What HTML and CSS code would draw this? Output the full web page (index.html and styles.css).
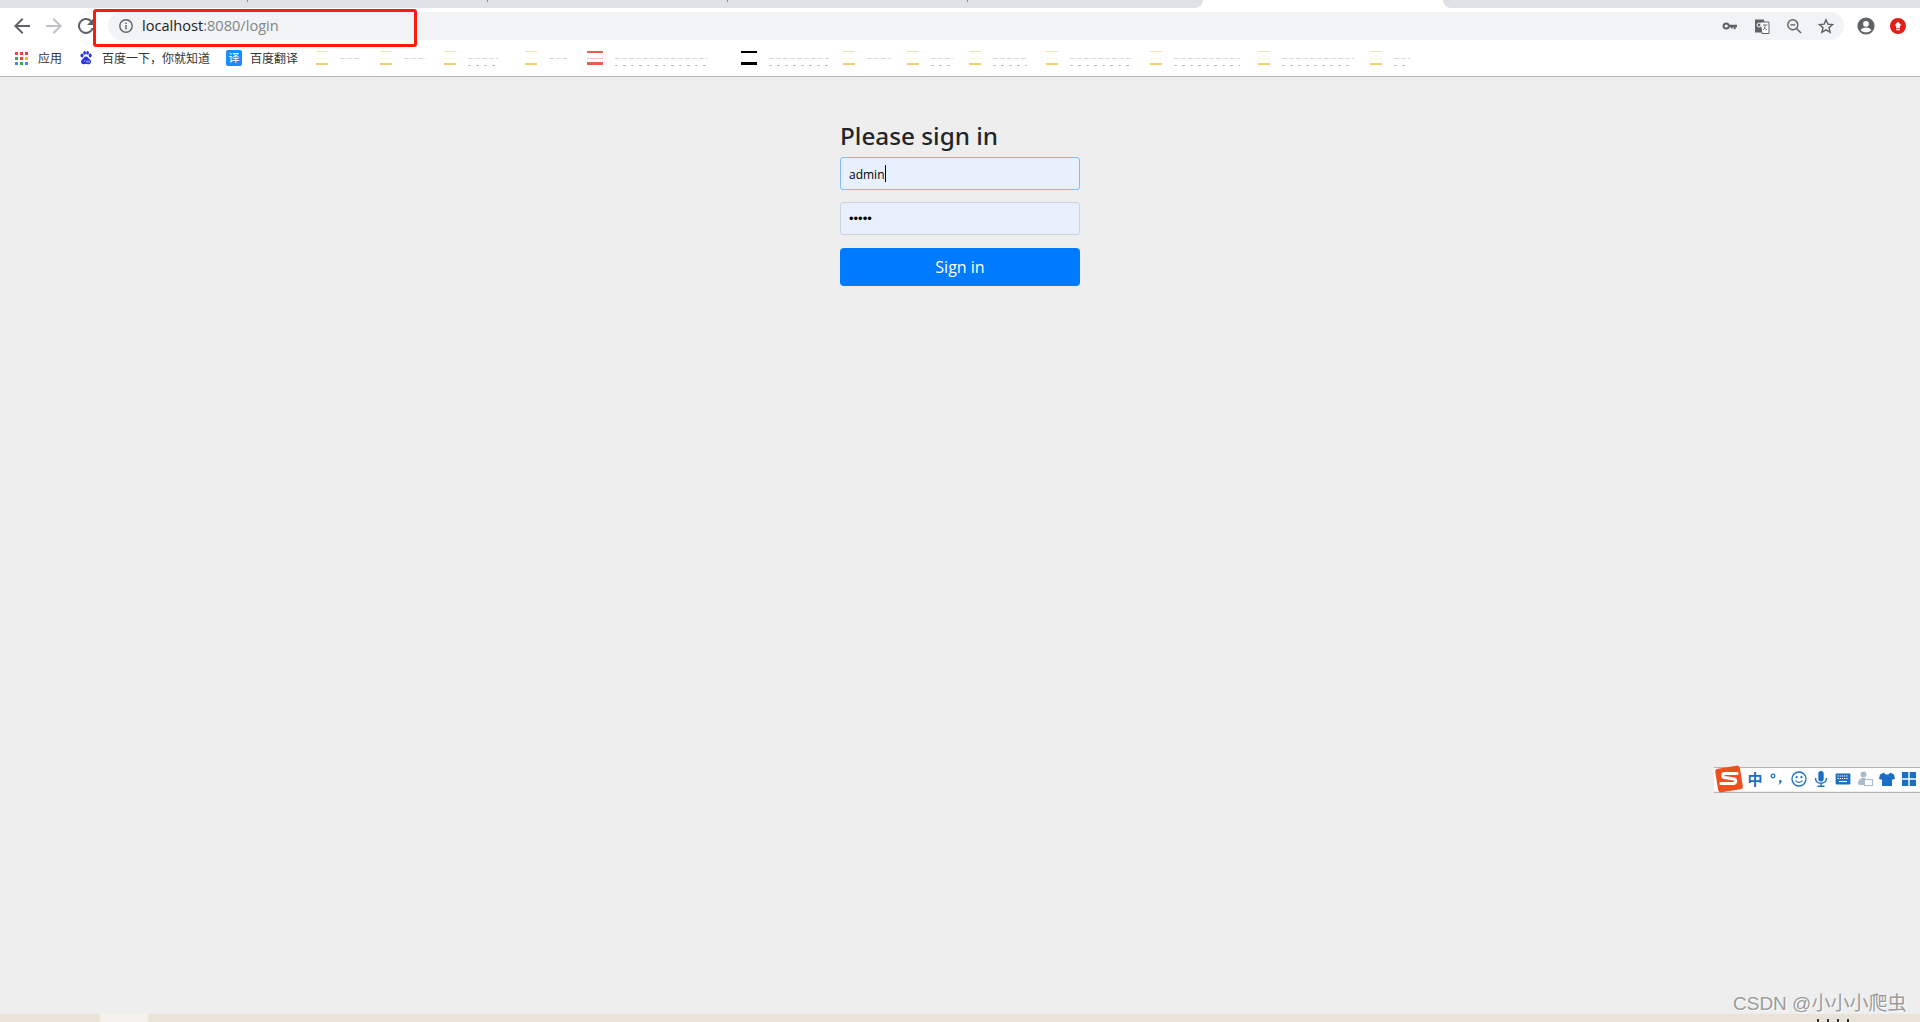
FILE: index.html
```html
<!DOCTYPE html>
<html lang="en">
<head>
<meta charset="utf-8">
<title>Please sign in</title>
<link rel="stylesheet" href="styles.css">
</head>
<body>
<div class="browser">
  <div class="tabstrip">
    <div class="tabs-left"><i class="tick"></i><i class="tick"></i><i class="tick"></i><i class="tick"></i></div>
    <div class="tab-active"></div>
    <div class="tabs-right"></div>
  </div>
  <div class="toolbar">
    <div class="nav">
      <svg class="ico" viewBox="0 0 24 24" width="24" height="24"><path d="M20 11H7.800l5.600-5.600L12 4l-8 8 8 8 1.400-1.400L7.800 13H20z" fill="#5f6368"/></svg>
      <svg class="ico" viewBox="0 0 24 24" width="24" height="24"><path d="M4 11h12.200l-5.600-5.600L12 4l8 8-8 8-1.400-1.400 5.600-5.600H4z" fill="#bdc1c6"/></svg>
      <svg class="ico" viewBox="0 0 24 24" width="24" height="24"><path d="M17.650 6.350A8 8 0 1 0 19.730 14h-2.080a6 6 0 1 1-1.410-6.240L13 11h7V4z" fill="#5f6368"/></svg>
    </div>
    <div class="omnibox">
      <svg class="info" viewBox="0 0 16 16" width="16" height="16"><circle cx="8" cy="8" r="6.200" fill="none" stroke="#5f6368" stroke-width="1.400"/><path d="M7.300 7h1.400v4.400H7.300zM7.300 4.500h1.400v1.400H7.300z" fill="#5f6368"/></svg>
      <span class="url">localhost<span class="url-rest">:8080/login</span></span>
      <div class="omni-actions">
        <svg viewBox="0 0 16 16" width="16" height="16"><circle cx="4.200" cy="8" r="2.600" fill="none" stroke="#5f6368" stroke-width="2"/><path d="M6.500 6.700h8.500v2.600h-1.400v1.900h-1.800V9.300h-1v1.200H8.900V9.300H6.500z" fill="#5f6368"/></svg>
        <svg viewBox="0 0 16 16" width="16" height="16"><path d="M1 1.500h9l1 13H1z" fill="#5f6368"/><path d="M6 4h9v11.500H8z" fill="#fff" stroke="#5f6368" stroke-width="1"/><circle cx="5" cy="7" r="2" fill="none" stroke="#fff" stroke-width="1"/><path d="M9 7h4.500M11 7c0 3-1 4-2 5M10 9.500l3 2.500" fill="none" stroke="#5f6368" stroke-width=".9"/></svg>
        <svg viewBox="0 0 16 16" width="16" height="16"><circle cx="6.800" cy="6.800" r="5" fill="none" stroke="#5f6368" stroke-width="1.400"/><path d="M10.500 10.500l4.500 4.500" stroke="#5f6368" stroke-width="1.600"/><path d="M4.400 6.200h4.800v1.300H4.400z" fill="#5f6368"/></svg>
        <svg viewBox="0 0 16 16" width="16" height="16"><path d="M8 1.800l1.900 4.300 4.700.4-3.600 3.100 1.100 4.600L8 11.800l-4.100 2.400L5 9.600 1.400 6.500l4.700-.4z" fill="none" stroke="#5f6368" stroke-width="1.400"/></svg>
      </div>
    </div>
    <div class="profile">
      <svg viewBox="0 0 18 18" width="18" height="18"><circle cx="9" cy="9" r="8.600" fill="#5f6368"/><circle cx="9" cy="6.800" r="2.900" fill="#fff"/><path d="M3.600 13c1.400-1.900 3.400-2.600 5.400-2.600s4 .7 5.400 2.600C13.200 14.500 11.200 15.300 9 15.300S4.800 14.500 3.600 13z" fill="#fff"/></svg>
      <svg viewBox="0 0 16 16" width="16" height="16"><circle cx="8" cy="8" r="8" fill="#dd2118"/><path d="M8 3.800l3.600 3.600H9.900v2.800H6.100V7.400H4.400zM6.100 11h3.800v1.200H6.100z" fill="#fff"/></svg>
    </div>
  </div>
  <div class="bookmarks">
    <div class="bm bm-apps">
      <span class="apps"><i class="r"></i><i class="r"></i><i class="r"></i><i class="g"></i><i class="r"></i><i class="y"></i><i class="b"></i><i class="g"></i><i class="b"></i></span>
      <span>应用</span>
    </div>
    <div class="bm bm-baidu">
      <svg viewBox="0 0 14 14" width="14" height="14"><g fill="#2932e1"><ellipse cx="3" cy="4.600" rx="1.500" ry="2"/><ellipse cx="5.600" cy="1.900" rx="1.400" ry="1.800"/><ellipse cx="8.600" cy="1.900" rx="1.400" ry="1.800"/><ellipse cx="11.200" cy="4.600" rx="1.500" ry="2"/><path d="M7 5.500c2 0 2.600 2 4.200 3.200 1.600 1.500.8 4.800-2.200 4.500-.9-.1-1.400-.4-2-.4s-1.200.4-2.200.4C2 13.400 1.400 10 3 8.700 4.400 7.500 5 5.500 7 5.500z"/></g><path d="M4.800 10h1.300M8 9.500v2.200M10 9.500v2.200" stroke="#fff" stroke-width=".8" fill="none"/></svg>
      <span>百度一下，你就知道</span>
    </div>
    <div class="bm bm-fanyi">
      <span class="fanyi">译</span>
      <span>百度翻译</span>
    </div>
    <div class="bm folder w64"><i class="fold"></i><i class="smear s20"></i></div>
    <div class="bm folder w64"><i class="fold"></i><i class="smear s22"></i></div>
    <div class="bm folder w81"><i class="fold"></i><i class="smear s30 two"></i></div>
    <div class="bm folder w62"><i class="fold"></i><i class="smear s18"></i></div>
    <div class="bm folder w154"><i class="fold red"></i><i class="smear s100 two"></i></div>
    <div class="bm folder w102"><i class="fold black"></i><i class="smear s60 two"></i></div>
    <div class="bm folder w64"><i class="fold"></i><i class="smear s24"></i></div>
    <div class="bm folder w62"><i class="fold"></i><i class="smear s22 two"></i></div>
    <div class="bm folder w77"><i class="fold"></i><i class="smear s34 two"></i></div>
    <div class="bm folder w104"><i class="fold"></i><i class="smear s62 two"></i></div>
    <div class="bm folder w108"><i class="fold"></i><i class="smear s66 two"></i></div>
    <div class="bm folder w112"><i class="fold"></i><i class="smear s72 two"></i></div>
    <div class="bm folder"><i class="fold"></i><i class="smear s16 two"></i></div>
  </div>
  <main class="page">
    <form class="signin">
      <h2 class="heading">Please sign in</h2>
      <div class="field field-focus"><span class="value">admin</span><i class="caret"></i></div>
      <div class="field"><span class="dots">•••••</span></div>
      <button class="submit" type="button">Sign in</button>
    </form>
  </main>
  <div class="taskstrip"><i class="task-active"></i><div class="task-marks"><i></i><i></i><i></i><i></i></div></div>
</div>

<div class="ime">
  <svg class="ime-logo" viewBox="0 0 30 30" width="30" height="30"><rect x="2.500" y="3" width="25" height="24" rx="3" transform="rotate(-9 15 15)" fill="#f0501e"/><path d="M23 9.500H10.500c-2 0-2.500 3.500 0 4l9.500 1.500c2.500.5 2 4.500-.5 4.500H7" fill="none" stroke="#fff" stroke-width="3.200" stroke-linecap="round"/></svg>
  <span class="ime-slot ime-zh">中</span>
  <span class="ime-slot"><svg viewBox="0 0 14 16" width="14" height="16"><circle cx="3" cy="5" r="1.800" fill="none" stroke="#1a6fc4" stroke-width="1.300"/><path d="M10.500 9c1 0 1.500 1 1 2-.4 1-1.200 2-2.500 2.700l-.4-.5c.8-.6 1.200-1.200 1.300-1.700-1.400-.4-1-2.500.6-2.500z" fill="#1a6fc4"/></svg></span>
  <span class="ime-slot"><svg viewBox="0 0 16 16" width="16" height="16"><circle cx="8" cy="8" r="7" fill="none" stroke="#1a6fc4" stroke-width="1.300"/><circle cx="5.600" cy="6.200" r="1.100" fill="#1a6fc4"/><circle cx="10.400" cy="6.200" r="1.100" fill="#1a6fc4"/><path d="M4.500 9.500c1.500 2.500 5.500 2.500 7 0" fill="none" stroke="#1a6fc4" stroke-width="1.200"/></svg></span>
  <span class="ime-slot"><svg viewBox="0 0 14 16" width="14" height="16"><rect x="4.300" y="0" width="5.400" height="10.500" rx="2.700" fill="#1a6fc4"/><path d="M1.500 7c0 7 11 7 11 0M7 12v3M3.500 15.300h7" fill="none" stroke="#1a6fc4" stroke-width="1.400"/></svg></span>
  <span class="ime-slot"><svg viewBox="0 0 16 12" width="16" height="12"><rect x=".6" y=".6" width="14.800" height="10.800" rx="1" fill="#1a6fc4"/><path d="M2.500 3h11M2.500 5.500h11" stroke="#fff" stroke-width="1.200" stroke-dasharray="1.300 .9"/><path d="M4 8.500h8" stroke="#fff" stroke-width="1.200"/></svg></span>
  <span class="ime-slot"><svg viewBox="0 0 16 16" width="16" height="16"><circle cx="6.500" cy="3.500" r="3" fill="#a9bac9"/><path d="M1 12c0-3 2.500-5 5.500-5 1.500 0 2 .5 2.500 1v6H2z" fill="#a9bac9"/><rect x="7.500" y="8.500" width="8" height="6" fill="#fff" stroke="#a9bac9"/></svg></span>
  <span class="ime-slot"><svg viewBox="0 0 16 16" width="16" height="16"><path d="M5 1.500L1 3.500 0 8l3 .8V15h10V8.800l3-.8-1-4.500-4-2c-.5 1.500-1.500 2-3 2s-2.500-.5-3-2z" fill="#1a6fc4"/></svg></span>
  <span class="ime-slot"><svg viewBox="0 0 14 14" width="14" height="14"><path d="M0 0h6.300v6.300H0zM7.700 0H14v6.300H7.700zM0 7.700h6.300V14H0zM7.700 7.700H14V14H7.700z" fill="#1a6fc4"/></svg></span>
</div>

<div class="annotation"></div>
<div class="watermark">CSDN @小小小爬虫</div>
</body>
</html>
```

FILE: styles.css
```css
* { box-sizing: border-box; }
html, body { margin: 0; height: 100%; overflow: hidden; }
body { font-family: "Open Sans", "Noto Sans CJK SC", sans-serif; background: #eee; }
i { display: block; font-style: normal; }
svg { display: block; flex: none; }

.browser { display: flex; flex-direction: column; height: 1022px; }

.tabstrip { display: flex; height: 8px; background: #fff; flex: none; }
.tabs-left { width: 1203px; background: #dee1e6; border-bottom-right-radius: 8px; display: flex; padding-left: 247px; gap: 239px; }
.tab-active { width: 240px; }
.tabs-right { flex: 1; background: #dee1e6; border-bottom-left-radius: 8px; }
.tick { width: 1px; height: 2px; background: #8a8d91; }

.toolbar { height: 32px; background: #fff; display: flex; align-items: center; padding: 4px 0 0 10px; flex: none; }
.nav { display: flex; gap: 8px; width: 98px; flex: none; }
.ico { width: 24px; height: 24px; }
.omnibox { width: 1736px; height: 28px; background: #f1f3f4; border-radius: 14px; display: flex; align-items: center; padding: 0 10px; flex: none; }
.info { flex: none; }
.url { font-size: 14.6px; line-height: 26px; padding-bottom: 2px; color: #202124; margin-left: 8px; white-space: nowrap; }
.url-rest { color: #80868b; }
.omni-actions { margin-left: auto; display: flex; gap: 10px; }
.omni-actions svg { width: 16px; height: 16px; margin-left: 6px; }
.profile { display: flex; align-items: center; gap: 15px; margin-left: 13px; }

.bookmarks { height: 37px; background: #fff; border-bottom: 1px solid #b8b8b8; flex: none; display: flex; align-items: center; padding-left: 15px; font-size: 12px; color: #333; white-space: nowrap; }
.bm { display: flex; align-items: center; flex: none; }
.bm-apps { width: 64px; gap: 10px; }
.bm-baidu { width: 147px; gap: 9px; }
.bm-fanyi { width: 90px; gap: 8px; }
.apps { display: grid; grid-template-columns: repeat(3, 3px); gap: 2px; width: 13px; }
.apps i { width: 3px; height: 3px; }
.r { background: #ea4335; } .g { background: #34a853; } .b { background: #4285f4; } .y { background: #fbbc05; }
.fanyi { width: 16px; height: 16px; border-radius: 2px; background: #1a8cff; color: #fff; font-size: 11px; line-height: 16px; text-align: center; }

.folder { gap: 12px; height: 16px; }
.fold { width: 12px; height: 14px; border-top: 1px solid #f3e2a3; border-bottom: 2px solid #f2cf6a; background: linear-gradient(#fcf6e2, #fcf6e2) 0 6px / 100% 1px no-repeat; }
.fold.red { width: 16px; border-top: 2px solid #e8604c; border-bottom: 3px solid #e8604c; background: linear-gradient(#f5c6bd, #f5c6bd) 0 5px / 100% 1px no-repeat; }
.fold.black { width: 16px; border-top: 2px solid #000; border-bottom: 3px solid #000; background: none; }
.smear { height: 8px; margin-top: 7px; background: repeating-linear-gradient(90deg, #d4d4d4 0 4px, #ececec 4px 6px, transparent 6px 7px, #dedede 7px 12px, transparent 12px 14px) 0 0 / 100% 1px no-repeat; }
.smear.two { background: repeating-linear-gradient(90deg, #d4d4d4 0 4px, #ececec 4px 6px, transparent 6px 7px, #dedede 7px 12px, transparent 12px 14px) 0 0 / 100% 1px no-repeat, repeating-linear-gradient(90deg, #c4c4c4 0 3px, transparent 3px 8px, #b8b8c4 8px 11px, transparent 11px 16px) 0 100% / 100% 1px no-repeat; }
.s16 { width: 16px; } .s18 { width: 18px; } .s20 { width: 20px; } .s22 { width: 22px; } .s24 { width: 24px; } .s30 { width: 30px; } .s34 { width: 34px; } .s60 { width: 60px; } .s62 { width: 62px; } .s66 { width: 66px; } .s72 { width: 72px; } .s100 { width: 93px; }
.w62 { width: 62px; } .w64 { width: 64px; } .w77 { width: 77px; } .w81 { width: 81px; } .w102 { width: 102px; } .w104 { width: 104px; } .w108 { width: 108px; } .w112 { width: 112px; } .w154 { width: 154px; }

.page { flex: 1; background: #eee; display: flex; justify-content: center; padding-top: 43px; }
.signin { width: 240px; display: flex; flex-direction: column; }
.heading { margin: 0 0 5px; font-family: "Noto Sans", sans-serif; font-size: 24.3px; line-height: 32px; font-weight: 500; color: #212529; }
.field { height: 33px; margin-bottom: 12px; background: #e8f0fe; border: 1px solid #ced4da; border-radius: 3px; padding: 0 8px; display: flex; align-items: center; font-size: 12px; color: #000; }
.field-focus { border-color: #80bdff; }
.value { margin-top: 2px; }
.caret { width: 1px; height: 17px; background: #000; }
.dots { font-family: "Liberation Sans", sans-serif; font-size: 13px; }
.submit { height: 38px; margin-top: 1px; background: #007bff; border: 0; border-radius: 4px; color: #fff; font: 400 16px "Open Sans", sans-serif; }

.taskstrip { height: 8px; background: #e9e3da; flex: none; padding-left: 100px; position: relative; overflow: hidden; }
.task-active { width: 48px; height: 8px; background: #f5f2ed; }
.task-marks { position: absolute; left: 1817px; top: 5px; display: flex; gap: 8px; }
.task-marks i { width: 2px; height: 3px; background: #333; }

.ime { position: absolute; left: 1714px; top: 764px; width: 206px; height: 30px; display: flex; align-items: center; background: linear-gradient(#fff, #fff) 0 3px / 100% 24px no-repeat; }
.ime::before { content: ""; position: absolute; left: 0; right: 0; top: 3px; height: 24px; border-top: 1px solid #b4b4b4; border-bottom: 1px solid #b4b4b4; }
.ime-logo { position: relative; }
.ime-slot { position: relative; width: 22px; display: flex; justify-content: center; align-items: center; flex: none; }
.ime-zh { color: #1a6fc4; font-size: 15px; font-weight: 700; line-height: 16px; }

.annotation { position: absolute; left: 93px; top: 9px; width: 324px; height: 38px; border: 3px solid #ff1a0f; border-radius: 3px; }
.watermark { position: absolute; left: 1733px; top: 988px; font: 400 19px "Liberation Sans", "Noto Sans CJK SC", sans-serif; color: #9a9a9a; text-shadow: 1px 1px 1px #fff; white-space: nowrap; }
```
